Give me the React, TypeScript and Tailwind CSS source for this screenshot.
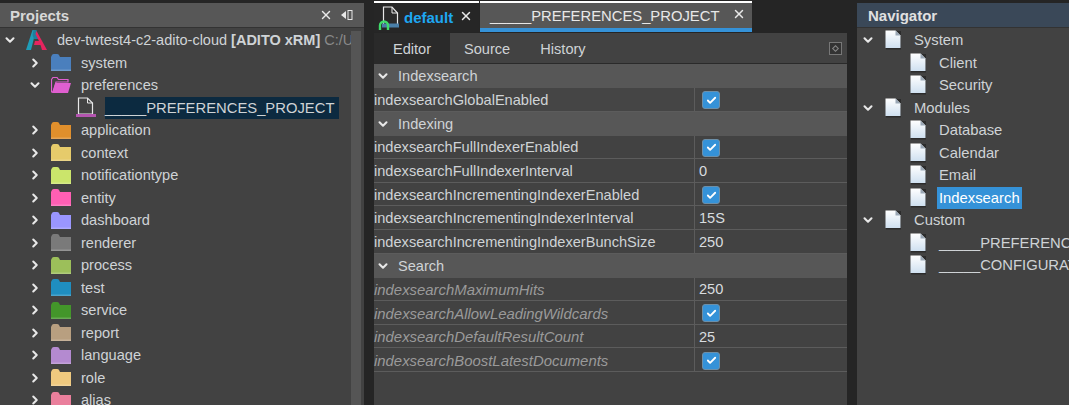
import { Check, ChevronDown, ChevronRight, X } from "lucide-react";
import { FC, ReactNode } from "react";

const folders = [
  { name: "system", color: "#4a7fbd" },
  { name: "preferences", color: "#e05fd0", open: true },
  { name: "application", color: "#e08f2c" },
  { name: "context", color: "#e6cb6b" },
  { name: "notificationtype", color: "#cbe56b" },
  { name: "entity", color: "#ff5fb4" },
  { name: "dashboard", color: "#9a96ff" },
  { name: "renderer", color: "#7a7a7a" },
  { name: "process", color: "#9cbf5a" },
  { name: "test", color: "#1f8ec0" },
  { name: "service", color: "#43962a" },
  { name: "report", color: "#b89f80" },
  { name: "language", color: "#b48ad0" },
  { name: "role", color: "#efc97f" },
  { name: "alias", color: "#ea7f9c" },
];

const Folder: FC<{ color: string; open?: boolean }> = ({ color, open }) =>
  open ? (
    <svg width="20" height="17" viewBox="0 0 20 17" className="shrink-0">
      <path d="M0.5 2.5 L2 0.5 H6 L7.5 2.5 H17 V5 H5 L2 15 H0.5 Z" fill="none" stroke={color} strokeWidth="1.2" />
      <path d="M4.5 6 H20 L17 16 H1 Z" fill={color} />
    </svg>
  ) : (
    <svg width="20" height="17" viewBox="0 0 20 17" className="shrink-0">
      <path d="M0 3 L1 1 Q1.5 0 3 0 H6 Q7.5 0 8 1 L9 3 H20 V17 H0 Z" fill={color} />
      <rect x="0" y="15.5" width="20" height="1.5" fill="#ffffff" opacity="0.2" />
    </svg>
  );

const OutlinePage: FC = () => (
  <svg width="20" height="22" viewBox="0 0 20 22" className="shrink-0">
    <path d="M2.5 1 H11.5 L16.5 6 V17 H2.5 Z" fill="#424242" stroke="#e8e8e8" strokeWidth="1.2" />
    <path d="M11.5 1 V6 H16.5" fill="none" stroke="#e8e8e8" strokeWidth="1" />
    <rect x="0" y="17" width="20" height="3" fill="#b455b0" />
  </svg>
);

const Page: FC = () => (
  <svg width="17" height="20" viewBox="0 0 17 20" className="shrink-0">
    <defs>
      <linearGradient id="page" x1="0" y1="0" x2="0" y2="1">
        <stop offset="0" stopColor="#ffffff" />
        <stop offset="1" stopColor="#cfe0f0" />
      </linearGradient>
    </defs>
    <rect x="1" y="1" width="15" height="18.5" fill="#2c2c2c" />
    <path d="M0.5 0.5 H10.5 L15.5 5.5 V18 H0.5 Z" fill="url(#page)" />
    <path d="M10.5 0.5 V5.5 H15.5 Z" fill="#9aa7b5" />
  </svg>
);

const Logo: FC = () => (
  <svg width="21" height="20" viewBox="0 0 21 20" className="shrink-0">
    <path d="M6.5 0 H10 L5 20 H0 Z" fill="#1f9db8" />
    <path d="M7.5 0 H10.5 L13 9 H8 L6.5 5 Z" fill="#1f7f9c" />
    <path d="M10.5 1 L21 20 H16 L14.5 15 H8 L9 11 H13 L9.5 4 Z" fill="#e6245f" />
  </svg>
);

const SourcePage: FC = () => (
  <svg width="22" height="24" viewBox="0 0 22 24" className="shrink-0">
    <path d="M5.5 1 H14 L19.5 7 V20 H5.5 Z" fill="#2a2a2a" stroke="#e8e8e8" strokeWidth="1.2" />
    <path d="M14 1 V7 H19.5" fill="none" stroke="#e8e8e8" strokeWidth="1" />
    <rect x="4" y="17.5" width="17" height="4" fill="#4a7fa8" />
    <path d="M2 24 V19.5 A4 4 0 0 1 10 19.5 V24" fill="none" stroke="#3fdc6a" strokeWidth="2.4" />
  </svg>
);

// size класс передаем целиком, иначе tailwind его не увидит
const TreeText: FC<{ children: ReactNode; className?: string; size?: string }> = ({
  children,
  className = "",
  size = "text-[14.8px]",
}) => (
  <span className={`whitespace-nowrap leading-[22px] text-[#cfd3d6] ${size} ${className}`}>{children}</span>
);

const NavItem: FC<{ label: string; selected?: boolean }> = ({ label, selected }) => (
  <div className="flex h-[22.5px] items-center pl-[53px]">
    <Page />
    <TreeText className={`ml-[10px] px-[2px] ${selected ? "bg-[#3592d8] text-white" : ""}`}>{label}</TreeText>
  </div>
);

const NavGroup: FC<{ label: string }> = ({ label }) => (
  <div className="flex h-[22.5px] items-center pl-[4px]">
    <ChevronDown size={14} strokeWidth={3.5} className="text-[#e8e8e8]" />
    <div className="ml-[10px] flex">
      <Page />
    </div>
    <TreeText className="ml-[12px]">{label}</TreeText>
  </div>
);

const SectionRow: FC<{ label: string }> = ({ label }) => (
  <div className="flex h-[24px] shrink-0 items-center bg-[#575757] pl-[2px] pr-px">
    <ChevronDown size={14} strokeWidth={3.5} className="text-[#e8e8e8]" />
    <span className="ml-[8px] pt-[2px] text-[14.6px] text-[#cfd3d6]">{label}</span>
  </div>
);

const CheckBox: FC = () => (
  <span className="flex h-[18px] w-[18px] items-center justify-center rounded-[3px] border border-[#6d8fa8] bg-[#3592d8]">
    <Check size={11} strokeWidth={4} className="text-white" />
  </span>
);

const PropRow: FC<{ label: string; value?: string; checked?: boolean; muted?: boolean; active?: boolean }> = ({
  label,
  value,
  checked,
  muted,
  active,
}) => (
  <div className={`flex h-[23.6px] shrink-0 items-center border-b border-[#5c5c5c] ${active ? "bg-[#454545]" : ""}`}>
    <span
      className={`w-[320px] whitespace-nowrap pt-[3px] ${muted ? "text-[14.9px] italic text-[#9a9a9a]" : "text-[14.6px] text-[#cfd3d6]"}`}
    >
      {label}
    </span>
    <div className="flex h-full flex-1 items-center border-l border-[#5c5c5c] pl-[4px]">
      {checked ? (
        <span className="ml-[3px] pt-[2px]">
          <CheckBox />
        </span>
      ) : (
        <span className="pt-[3px] text-[14.6px] text-[#d8dcdf]">{value}</span>
      )}
    </div>
  </div>
);

export default function App() {
  return (
    <div className="flex h-[405px] w-[1069px] overflow-hidden bg-[#252525] font-['Liberation_Sans',Arial,sans-serif]">
      {/* Projects */}
      <div className="flex w-[364px] shrink-0 flex-col pt-[3px]">
        <div className="flex h-[25px] items-center justify-between border-b border-[#333] bg-[#575757] pl-[10px] pr-[11px] pt-[2px]">
          <span className="text-[15px] font-bold text-[#d8d8d8]">Projects</span>
          <div className="flex -translate-y-[1px] items-center gap-[8px]">
            <X size={14} strokeWidth={2.5} className="text-[#e8e8e8]" />
            <svg width="12" height="10" viewBox="0 0 12 10">
              <path d="M0 5 L5 1 V9 Z" fill="#e8e8e8" />
              <rect x="7" y="0.5" width="4" height="9" fill="none" stroke="#e8e8e8" />
            </svg>
          </div>
        </div>
        <div className="flex min-h-0 flex-1 bg-[#424242]">
          <div className="min-w-0 flex-1 overflow-hidden pt-px">
            <div className="flex h-[22.5px] items-center pl-[3px]">
              <ChevronDown size={14} strokeWidth={3.5} className="shrink-0 text-[#e8e8e8]" />
              <span className="ml-[9px] flex">
                <Logo />
              </span>
              <TreeText size="text-[14.5px]" className="ml-[10px] overflow-hidden">
                dev-twtest4-c2-adito-cloud <b className="font-bold">[ADITO xRM]</b>{" "}
                <span className="text-[#8a8a8a]">C:/U</span>
              </TreeText>
            </div>
            {folders.map((f) => (
              <div key={f.name}>
                <div className="flex h-[22.5px] items-center pl-[28px]">
                  {f.open ? (
                    <ChevronDown size={14} strokeWidth={3.5} className="shrink-0 text-[#e8e8e8]" />
                  ) : (
                    <ChevronRight size={14} strokeWidth={3.5} className="shrink-0 text-[#e8e8e8]" />
                  )}
                  <span className="ml-[9px] flex">
                    <Folder color={f.color} open={f.open} />
                  </span>
                  <TreeText size="text-[14.6px]" className="ml-[10px]">
                    {f.name}
                  </TreeText>
                </div>
                {f.open && (
                  <div className="flex h-[22.5px] items-center pl-[76px]">
                    <OutlinePage />
                    <TreeText className="ml-[9px] bg-[#0c2a40] pr-[5px]">_____PREFERENCES_PROJECT</TreeText>
                  </div>
                )}
              </div>
            ))}
          </div>
          <div className="mr-[3px] mt-[3px] w-[10px] shrink-0 bg-[#555555]" />
        </div>
      </div>

      {/* Editor */}
      <div className="ml-[10px] flex w-[473px] shrink-0 flex-col">
        <div className="flex h-[33px] shrink-0 items-start pt-px">
          <div className="flex h-[31px] w-[105px] items-center border-t-2 border-white bg-[#262626] pl-[4px]">
            <SourcePage />
            <span className="ml-[4px] translate-y-[1px] text-[15px] font-bold text-[#1ea7f2]">default</span>
            <X size={14} strokeWidth={2.5} className="ml-[6px] -translate-y-[2px] text-[#e8e8e8]" />
          </div>
          <div className="ml-px flex h-[31px] w-[272px] flex-col border-t-2 border-white bg-[#575757]">
            <div className="flex flex-1 items-center pl-[10px]">
              <span className="translate-y-[1px] whitespace-nowrap text-[14.8px] text-[#e8e8e8]">
                _____PREFERENCES_PROJECT
              </span>
              <X size={14} strokeWidth={2.5} className="ml-[13px] -translate-y-[2px] text-[#e8e8e8]" />
            </div>
            <div className="h-[4px] bg-[#3592d8]" />
          </div>
        </div>
        <div className="flex min-h-0 flex-1 flex-col bg-[#424242]">
          <div className="flex h-[31px] shrink-0 items-center border-b border-[#2a2a2a] pr-[5px] text-[14.6px] text-[#cfd3d6]">
            <span className="flex h-full w-[76px] items-center justify-center bg-[#2a2a2a] pt-[3px]">Editor</span>
            <span className="ml-[14px] pt-[3px]">Source</span>
            <span className="ml-[30px] pt-[3px]">History</span>
            <span className="ml-auto flex h-[13px] w-[13px] items-center justify-center border border-[#777] bg-[#333]">
              <span className="h-[5px] w-[5px] rotate-45 border border-[#888]" />
            </span>
          </div>
          <SectionRow label="Indexsearch" />
          <PropRow label="indexsearchGlobalEnabled" checked active />
          <SectionRow label="Indexing" />
          <PropRow label="indexsearchFullIndexerEnabled" checked />
          <PropRow label="indexsearchFullIndexerInterval" value="0" />
          <PropRow label="indexsearchIncrementingIndexerEnabled" checked />
          <PropRow label="indexsearchIncrementingIndexerInterval" value="15S" />
          <PropRow label="indexsearchIncrementingIndexerBunchSize" value="250" />
          <SectionRow label="Search" />
          <PropRow label="indexsearchMaximumHits" value="250" muted />
          <PropRow label="indexsearchAllowLeadingWildcards" checked muted />
          <PropRow label="indexsearchDefaultResultCount" value="25" muted />
          <PropRow label="indexsearchBoostLatestDocuments" checked muted />
        </div>
      </div>

      {/* Navigator */}
      <div className="ml-[10px] flex min-w-0 flex-1 flex-col pt-[3px]">
        <div className="flex h-[25px] items-center border-b border-[#333] bg-[#3a4858] pl-[11px] pt-[2px]">
          <span className="text-[15px] font-bold text-[#e0e0e0]">Navigator</span>
        </div>
        <div className="flex-1 overflow-hidden bg-[#424242] pt-px">
          <NavGroup label="System" />
          <NavItem label="Client" />
          <NavItem label="Security" />
          <NavGroup label="Modules" />
          <NavItem label="Database" />
          <NavItem label="Calendar" />
          <NavItem label="Email" />
          <NavItem label="Indexsearch" selected />
          <NavGroup label="Custom" />
          <NavItem label="_____PREFERENCES_PROJECT" />
          <NavItem label="_____CONFIGURATION_PROJECT" />
        </div>
      </div>
    </div>
  );
}
